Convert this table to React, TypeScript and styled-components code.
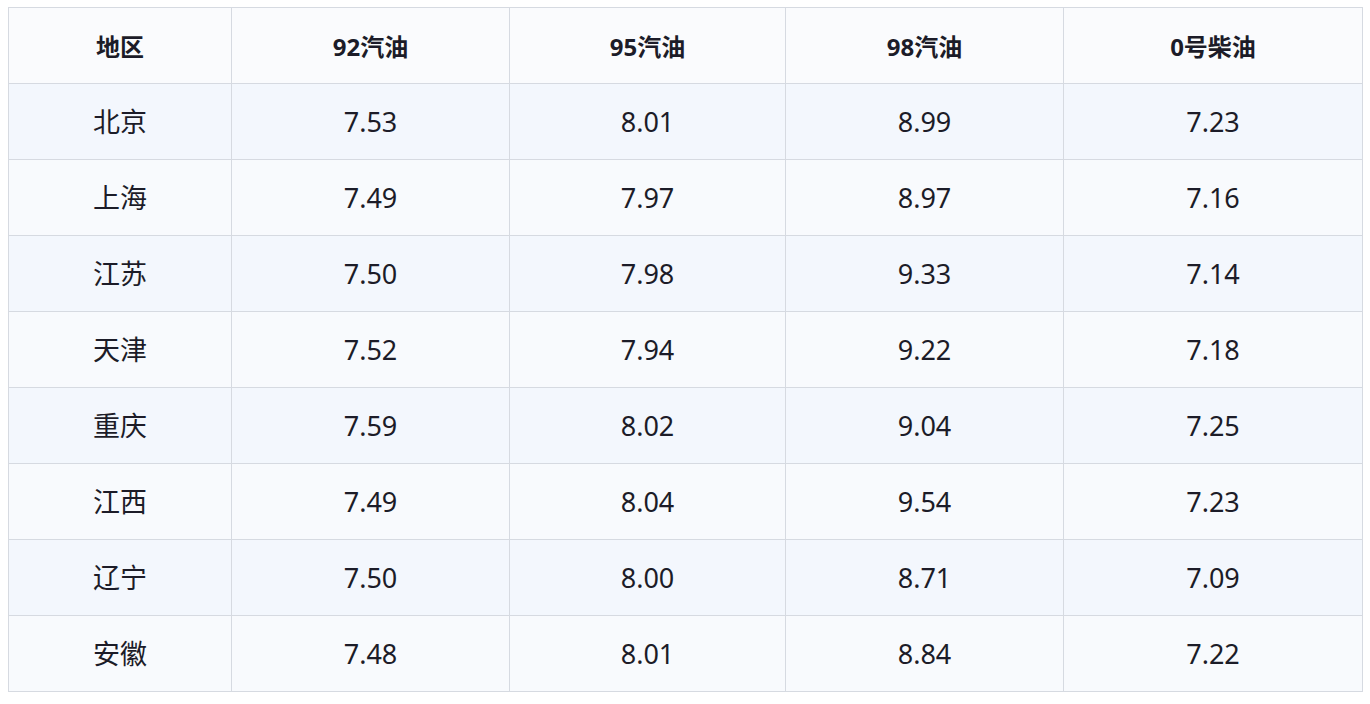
import React from "react";
import styled, { createGlobalStyle } from "styled-components";

const GlobalStyle = createGlobalStyle`
  html, body {
    margin: 0;
    padding: 0;
    background: #ffffff;
  }
  body {
    font-family: "Noto Sans", "Noto Sans CJK SC", sans-serif;
    color: #1c1c28;
  }
`;

const Page = styled.div`
  padding: 7px 8px 0 8px;
`;

const Table = styled.table`
  width: 1354px;
  border-collapse: collapse;
  table-layout: fixed;
  border: 1px solid #d6dae1;
`;

const HeadCell = styled.th`
  height: 75px;
  padding: 0;
  border: 1px solid #d6dae1;
  background: #fafbfd;
  font-size: 24px;
  font-weight: 700;
  text-align: center;
  vertical-align: middle;
`;

const Row = styled.tr<{ $odd: boolean }>`
  background: ${(p) => (p.$odd ? "#f3f7fd" : "#f8fafd")};
`;

const Cell = styled.td`
  height: 75px;
  padding: 0;
  border: 1px solid #d6dae1;
  font-size: 27px;
  line-height: 1;
  text-align: center;
  vertical-align: middle;
`;

const widths = [223, 278, 276, 278, 299];
const headers = ["地区", "92汽油", "95汽油", "98汽油", "0号柴油"];

const data = [
  ["北京", "7.53", "8.01", "8.99", "7.23"],
  ["上海", "7.49", "7.97", "8.97", "7.16"],
  ["江苏", "7.50", "7.98", "9.33", "7.14"],
  ["天津", "7.52", "7.94", "9.22", "7.18"],
  ["重庆", "7.59", "8.02", "9.04", "7.25"],
  ["江西", "7.49", "8.04", "9.54", "7.23"],
  ["辽宁", "7.50", "8.00", "8.71", "7.09"],
  ["安徽", "7.48", "8.01", "8.84", "7.22"],
];

export default function App() {
  return (
    <>
      <GlobalStyle />
      <Page>
        <Table>
          <colgroup>
            {widths.map((w, i) => (
              <col key={i} style={{ width: w }} />
            ))}
          </colgroup>
          <thead>
            <tr>
              {headers.map((h) => (
                <HeadCell key={h}>{h}</HeadCell>
              ))}
            </tr>
          </thead>
          <tbody>
            {data.map((row, i) => (
              <Row key={row[0]} $odd={i % 2 === 0}>
                {row.map((v, j) => (
                  <Cell key={j}>{v}</Cell>
                ))}
              </Row>
            ))}
          </tbody>
        </Table>
      </Page>
    </>
  );
}
